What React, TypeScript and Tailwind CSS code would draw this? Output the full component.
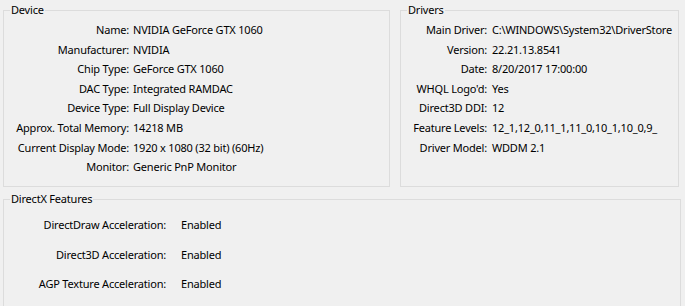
import React from "react";

const device: [string, string][] = [
  ["Name:", "NVIDIA GeForce GTX 1060"],
  ["Manufacturer:", "NVIDIA"],
  ["Chip Type:", "GeForce GTX 1060"],
  ["DAC Type:", "Integrated RAMDAC"],
  ["Device Type:", "Full Display Device"],
  ["Approx. Total Memory:", "14218 MB"],
  ["Current Display Mode:", "1920 x 1080 (32 bit) (60Hz)"],
  ["Monitor:", "Generic PnP Monitor"],
];

const drivers: [string, string][] = [
  ["Main Driver:", "C:\\WINDOWS\\System32\\DriverStore"],
  ["Version:", "22.21.13.8541"],
  ["Date:", "8/20/2017 17:00:00"],
  ["WHQL Logo'd:", "Yes"],
  ["Direct3D DDI:", "12"],
  ["Feature Levels:", "12_1,12_0,11_1,11_0,10_1,10_0,9_"],
  ["Driver Model:", "WDDM 2.1"],
];

const features: [string, string][] = [
  ["DirectDraw Acceleration:", "Enabled"],
  ["Direct3D Acceleration:", "Enabled"],
  ["AGP Texture Acceleration:", "Enabled"],
];

function Group({
  title,
  className,
  children,
}: {
  title: string;
  className: string;
  children: React.ReactNode;
}) {
  return (
    <fieldset className={`border border-[#dcdcdc] ${className}`}>
      <legend className="ml-[6px] px-[1px] leading-[16px]">{title}</legend>
      {children}
    </fieldset>
  );
}

export default function App() {
  return (
    <div
      className="w-[685px] h-[306px] overflow-hidden bg-[#f0f0f0] pl-[3px] pt-[2px] text-[11px] tracking-[-0.2px] text-black"
      style={{ fontFamily: '"Noto Sans", "Open Sans", sans-serif' }}
    >
      <div className="flex gap-[10px]">
        <Group title="Device" className="w-[387px] h-[185px]">
          <div className="grid grid-cols-[125px_1fr] gap-x-[4px] pt-[2px] leading-[19.6px]">
            {device.map(([k, v]) => (
              <React.Fragment key={k}>
                <div className="text-right whitespace-nowrap">{k}</div>
                <div className="whitespace-nowrap">{v}</div>
              </React.Fragment>
            ))}
          </div>
        </Group>
        <Group title="Drivers" className="w-[279px] h-[185px]">
          <div className="grid grid-cols-[86px_180px] gap-x-[5px] pt-[2px] leading-[19.6px]">
            {drivers.map(([k, v]) => (
              <React.Fragment key={k}>
                <div className="text-right whitespace-nowrap">{k}</div>
                <div className="whitespace-nowrap">{v}</div>
              </React.Fragment>
            ))}
          </div>
        </Group>
      </div>
      <Group title="DirectX Features" className="mt-[4px] w-[678px] h-[130px]">
        <div className="grid grid-cols-[162px_1fr] gap-x-[15px] pt-[3px] leading-[29.5px]">
          {features.map(([k, v]) => (
            <React.Fragment key={k}>
              <div className="text-right whitespace-nowrap">{k}</div>
              <div className="whitespace-nowrap">{v}</div>
            </React.Fragment>
          ))}
        </div>
      </Group>
    </div>
  );
}
